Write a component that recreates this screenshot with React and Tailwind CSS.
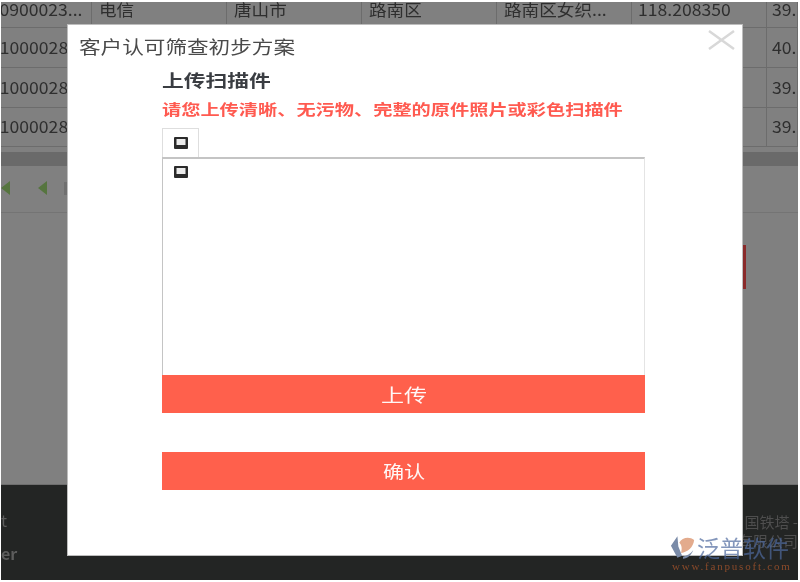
import React from 'react';

const cjk = '"Noto Sans CJK SC", "Liberation Sans", sans-serif';

const rows = [
  ['0900023...', '电信', '唐山市', '路南区', '路南区女织...', '118.208350', '39.'],
  ['1000028', '', '', '', '', '', '40.'],
  ['1000028', '', '', '', '', '', '39.'],
  ['1000028', '', '', '', '', '', '39.'],
];

const colClasses = [
  'w-[91px] justify-end',
  'w-[135px] pl-[7px]',
  'w-[135px] pl-[7px]',
  'w-[135px] pl-[7px]',
  'w-[135px] pl-[7px]',
  'w-[135px] pl-[6px]',
  'flex-1 pl-[5px]',
];

const rowHeights = ['h-[26px]', 'h-[40px]', 'h-[40px]', 'h-[39px]'];

// the scanned-document glyph used on the tab and in the drop area
function ScanIcon() {
  return (
    <svg width="14" height="12" viewBox="0 0 14 12" className="block">
      <rect width="14" height="12" rx="1" fill="#2b2b2b" />
      <rect x="2.5" y="2" width="9" height="6" fill="#ececec" />
    </svg>
  );
}

function CloseIcon() {
  return (
    <svg width="27" height="20" viewBox="0 0 27 20" className="absolute right-[7px] top-[5px]">
      <path d="M1 1 L26 19 M26 1 L1 19" stroke="#d8d8d8" strokeWidth="2.5" fill="none" />
    </svg>
  );
}

function Table() {
  return (
    <div className="bg-[#808080] pb-[5px]">
      {rows.map((row, i) => (
        <div key={i} className={`flex border-b border-[#6c6c6c] ${rowHeights[i]}`}>
          {row.map((cell, j) => (
            <div
              key={j}
              className={`flex h-full shrink-0 items-center overflow-hidden whitespace-nowrap border-r border-[#6c6c6c] text-[16px] text-[#2e2e2e] ${colClasses[j]} ${j === 0 ? (i === 0 ? 'pr-[8px]' : 'pr-[23px]') : ''}`}
            >
              <span className={`inline-block scale-x-[1.1] ${j === 0 ? 'origin-right' : 'origin-left'} ${i === 0 ? '-mt-[12px]' : '-mt-[2px]'}`}>
                {cell}
              </span>
            </div>
          ))}
        </div>
      ))}
    </div>
  );
}

function Toolbar() {
  return (
    <div className="flex h-[47px] items-center border-b border-[#747474] bg-[#808080] pb-[2px]">
      <div className="h-0 w-0 border-y-[7px] border-r-[9px] border-y-transparent border-r-[#56753f]" />
      <div className="ml-[28px] h-0 w-0 border-y-[7px] border-r-[9px] border-y-transparent border-r-[#56753f]" />
      <div className="ml-[17px] h-[13px] w-[4px] bg-[#707070]" />
    </div>
  );
}

function Watermark() {
  return (
    <div className="absolute bottom-[10px] right-[9px] w-[121px]">
      <div className="flex items-center gap-[1px]">
        <svg width="26" height="25" viewBox="0 0 28 26" className="shrink-0">
          <path d="M8 1 L1 11 L8 24 L13 22 L9 12 Z" fill="#7a8ba8" />
          <path d="M10 8 C13 2 21 1 26 5 C25 13 19 18 12 19 C13 14 13 11 10 8 Z" fill="#e3ab8d" />
          <path d="M14 23 C18 22 22 20 25 16 C23 21 19 25 14 25 Z" fill="#7a8ba8" />
        </svg>
        <span className="whitespace-nowrap text-[23px] leading-none text-[#4f6a9e]/70">泛普软件</span>
      </div>
      <div className="mt-[1px] whitespace-nowrap pl-[2px] font-['Liberation_Serif',serif] text-[11px] leading-none tracking-[1.8px] text-[#8a4a2a]">
        www.fanpusoft.com
      </div>
    </div>
  );
}

function Modal() {
  return (
    <div className="absolute left-[68px] top-[25px] h-[530px] w-[674px] bg-white outline outline-1 outline-[#bdbdbd]">
      <div className="pl-[11px] pt-[11px] text-[18px] leading-[20px] text-[#4a4a4a]">
        <span className="inline-block origin-left scale-x-[1.2]">客户认可筛查初步方案</span>
      </div>
      <CloseIcon />

      <div className="ml-[94px] mt-[12px] w-[483px]">
        <div className="text-[17px] font-bold leading-[24px] text-[#3a3d42]">
          <span className="inline-block origin-left scale-x-[1.28]">上传扫描件</span>
        </div>
        <div className="mt-[7px] whitespace-nowrap text-[15px] font-bold leading-[20px] text-[#ff5a50]">
          <span className="inline-block origin-left scale-x-[1.28]">请您上传清晰、无污物、完整的原件照片或彩色扫描件</span>
        </div>

        <div className="mt-[9px] flex h-[29px] w-[37px] items-center justify-center border border-b-0 border-[#dedede] bg-white pb-[1px]">
          <ScanIcon />
        </div>
        <div className="h-[218px] border border-b-0 border-t-2 border-[#c4c4c4] border-r-[#e4e4e4] pl-[11px] pt-[7px]">
          <ScanIcon />
        </div>
        <div className="flex h-[38px] items-center justify-center bg-[#ff604c] text-[18px] text-white/95">
          <span className="inline-block scale-x-[1.28]">上传</span>
        </div>
        <div className="mt-[39px] flex h-[38px] items-center justify-center bg-[#ff604c] text-[17px] text-white/95">
          <span className="inline-block scale-x-[1.24]">确认</span>
        </div>
      </div>
    </div>
  );
}

export default function App() {
  return (
    <div className="relative h-[582px] w-[800px] overflow-hidden bg-white blur-[0.4px]" style={{ fontFamily: cjk }}>
      <div className="ml-px mr-[2px] mt-[2px] flex h-[578px] flex-col overflow-hidden bg-[#808080]">
        <Table />
        <div className="h-[14px] bg-[#6a6a6a]" />
        <Toolbar />
        <div className="relative flex-1 bg-[#808080]">
          <div className="absolute right-[52px] top-[32px] h-[44px] w-[3px] bg-[#8a2a2a]" />
        </div>
        <div className="flex h-[96px] justify-between border-t border-[#6e6e6e] bg-[#232524] text-[#5c5c5c]">
          <div className="pt-[27px] text-[16px] leading-[16px]">
            <div>t</div>
            <div className="mt-[17px] font-bold">er</div>
          </div>
          <div className="whitespace-nowrap pt-[27px] text-right text-[15px] leading-[19px] text-[#4e4e4e]">
            <div>国铁塔 -</div>
            <div>有限公司</div>
          </div>
        </div>
      </div>
      <Modal />
      <Watermark />
    </div>
  );
}
